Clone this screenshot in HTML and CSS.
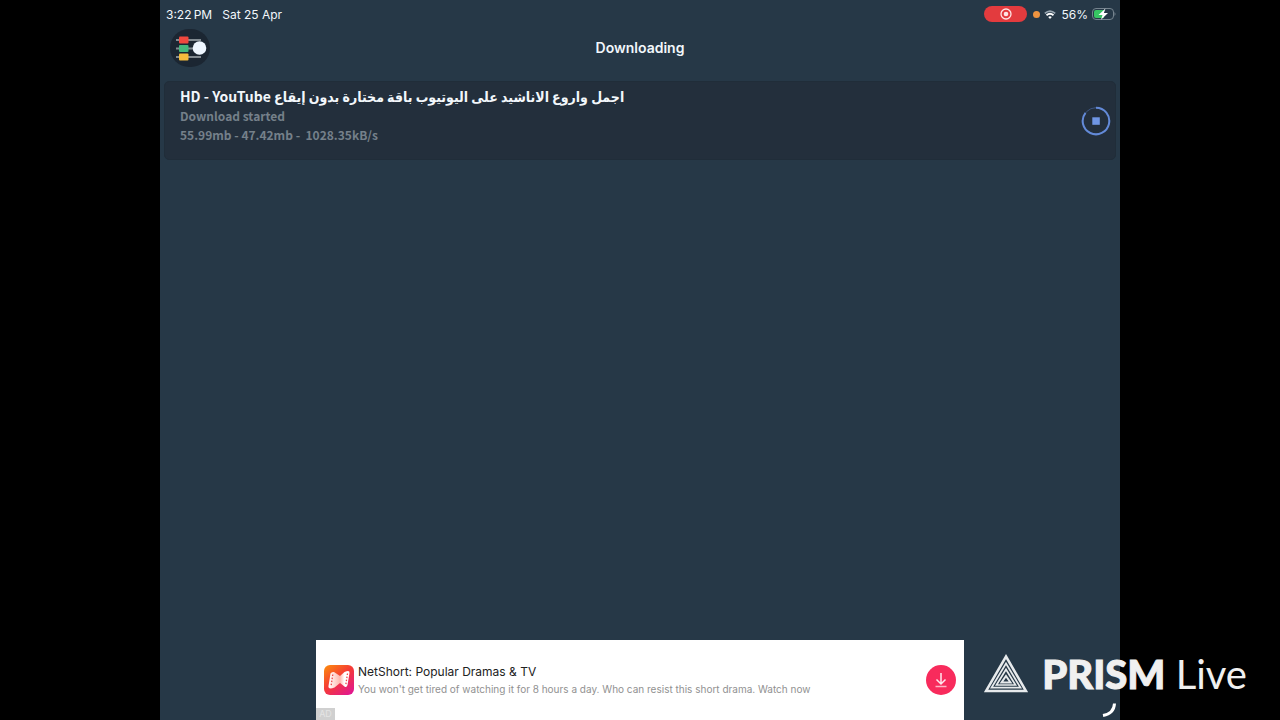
FILE: index.html
```html
<!DOCTYPE html>
<html lang="en">
<head>
	<title>Downloading</title>
	<meta charset="utf-8">
	<link rel="stylesheet" href="styles.css">
</head>
<body>
	<div class="screen">
		<div class="status">
			<span class="time">3:22&thinsp;PM</span>
			<span class="date">Sat 25 Apr</span>
			<div class="rec">
				<svg width="12" height="12" viewBox="0 0 12 12">
					<circle cx="6" cy="6" r="5" fill="none" stroke="#ffe3e3" stroke-width="1.3"/>
					<circle cx="6" cy="6" r="2.3" fill="#ffe3e3"/>
				</svg>
			</div>
			<i class="dot"></i>
			<svg class="wifi" width="12" height="9" viewBox="0 0 12 9">
				<path d="M0.8 3.4Q6 -1.2 11.2 3.4" fill="none" stroke="#98a6b1" stroke-width="1.7"/>
				<path d="M2.5 5.3Q6 2.4 9.500 5.3" fill="none" stroke="#fff" stroke-width="1.9"/>
				<path d="M4.2 7Q6 5.5 7.8 7L6 8.9z" fill="#fff"/>
			</svg>
			<span class="percent">56%</span>
			<svg width="24" height="12" viewBox="0 0 24 12">
				<rect x="0.5" y="0.5" width="21" height="11" rx="3.5" fill="none" stroke="#75838e"/>
				<path d="M4 2H12V10H4Q2 10 2 8V4Q2 2 4 2z" fill="#37c463"/>
				<path d="M22.500 4Q24.500 6 22.500 8z" fill="#75838e"/>
				<path d="M13.500 0.5L6.500 6.900H10.5L9 11.8L16 5.100H11.9z" fill="#fff"/>
			</svg>
		</div>
		<header class="nav">
			<button class="settings" aria-label="Settings">
				<svg width="40" height="38" viewBox="0 0 40 38">
					<path d="M6 11H31M6 19.500H31M6 28H31" stroke="#818a91" stroke-width="2"/>
					<rect x="9" y="7.500" width="9.500" height="7" rx="1" fill="#ef483e"/>
					<rect x="9" y="16" width="9.500" height="7" rx="1" fill="#43b77b"/>
					<rect x="9" y="24.500" width="9.500" height="7" rx="1" fill="#f5bc3c"/>
					<circle cx="29.500" cy="19" r="6.800" fill="#eef6ff"/>
				</svg>
			</button>
			<h1>Downloading</h1>
		</header>
		<main>
			<div class="item">
				<div class="info">
					<h2 dir="rtl">اجمل واروع الاناشيد على اليوتيوب باقة مختارة بدون إيقاع HD - YouTube</h2>
					<p>Download started</p>
					<p>55.99mb - 47.42mb -&nbsp; 1028.35kB/s</p>
				</div>
				<button class="stop" aria-label="Stop download">
					<svg width="30" height="30" viewBox="0 0 30 30">
						<circle cx="15" cy="15" r="13.300" fill="none" stroke="#3c5580" stroke-width="1"/>
						<path d="M15 1.700A13.300 13.300 0 1 1 4.500 6.800" fill="none" stroke="#638ad8" stroke-width="2"/>
						<rect x="11.300" y="11.300" width="7.500" height="7.500" fill="#6f96e4"/>
					</svg>
				</button>
			</div>
		</main>
		<div class="ad">
			<svg class="app" width="30" height="30" viewBox="0 0 30 30">
				<defs>
					<linearGradient id="bg" x1="0.100" y1="0" x2="0.900" y2="1">
						<stop offset="0" stop-color="#fb870f"/>
						<stop offset="0.450" stop-color="#f53b35"/>
						<stop offset="1" stop-color="#e01693"/>
					</linearGradient>
					<linearGradient id="film" x1="0" y1="0" x2="1" y2="0">
						<stop offset="0" stop-color="#fff"/>
						<stop offset="0.550" stop-color="#ffb9ad"/>
						<stop offset="0.750" stop-color="#fff"/>
					</linearGradient>
				</defs>
				<rect width="30" height="30" rx="6" fill="url(#bg)"/>
				<path d="M6.500 8.500Q7.500 6.500 10 7L16 11L20.500 7Q26 4.500 25.500 8L23.500 20Q22.500 23 20.500 21.500L16 18L10.500 22.500Q4 25 4.500 21z" fill="url(#film)"/>
				<path d="M8.800 9.500L7 21.500M23.500 8.500L21.700 20.500" stroke="#f04747" stroke-width="1.300" stroke-dasharray="1.500 1.600"/>
			</svg>
			<div class="adtext">
				<h3>NetShort: Popular Dramas &amp; TV</h3>
				<p>You won't get tired of watching it for 8 hours a day. Who can resist this short drama. Watch now</p>
			</div>
			<button class="get" aria-label="Download">
				<svg width="30" height="30" viewBox="0 0 30 30">
					<path d="M15 8V18.500M10.500 14.500L15 19L19.500 14.500" fill="none" stroke="#ffe8ee" stroke-width="1.500"/>
					<path d="M9.500 21.500H20.500" stroke="#ffb4c5" stroke-width="1.500"/>
				</svg>
			</button>
			<span class="tag">AD</span>
		</div>
	</div>
	<div class="brand">
		<svg width="44" height="41" viewBox="0 0 44 41">
			<path d="M22 2.500L42 37H2z" fill="none" stroke="#e7eaec" stroke-width="2.500"/>
			<path d="M22 9.500L36.500 33.700H7.500z" fill="none" stroke="#e7eaec" stroke-width="1.700"/>
			<path d="M22 15.500L31.500 31H12.500z" fill="none" stroke="#e7eaec" stroke-width="1.700"/>
			<path d="M22 22L26.500 28.500H17.500z" fill="none" stroke="#e7eaec" stroke-width="2"/>
		</svg>
		<span><b>PRISM</b> Live</span>
	</div>
	<svg class="spin" width="16" height="16" viewBox="0 0 16 16">
		<path d="M13.500 1.500Q13 11.500 2 13.500" fill="none" stroke="#fff" stroke-width="3"/>
	</svg>
</body>
</html>
```

FILE: styles.css
```css
*{
	margin:0;
	padding:0;
	box-sizing: border-box;
}
body{
	background: #000;
	font-family: Inter, "Liberation Sans", sans-serif;
	color: #f2f7fb;
	overflow: hidden;
}
button{
	border: 0;
	background: none;
	cursor: pointer;
}
svg{
	display: block;
}
.screen{
	width: 75%;
	min-height: 100vh;
	margin: 0 auto;
	background: #263847;
	display: flex;
	flex-direction: column;
}
.status{
	height: 28px;
	padding: 0 4px 0 6px;
	display: flex;
	align-items: center;
	font-size: 12px;
}
.date{
	margin-left: 10px;
}
.rec{
	width: 43px;
	height: 16px;
	margin-left: auto;
	border-radius: 8px;
	background: #e33b3e;
	display: flex;
	align-items: center;
	justify-content: center;
}
.dot{
	width: 7px;
	height: 7px;
	margin: 0 4px 0 6px;
	border-radius: 50%;
	background: #ee9440;
}
.percent{
	margin: 0 4px 0 5px;
}
.nav{
	height: 40px;
	padding: 0 10px;
	display: grid;
	grid-template-columns: 1fr auto 1fr;
	align-items: center;
}
.settings{
	width: 40px;
	height: 38px;
	border-radius: 20px;
	background: #1b2632;
}
.nav h1{
	font-size: 14px;
	line-height: 18px;
	font-weight: 600;
}
main{
	flex: 1;
	padding: 13px 4px;
}
.item{
	display: flex;
	align-items: center;
	min-height: 79px;
	padding: 0 4px 0 15px;
	border: 1px solid #202d39;
	border-radius: 5px;
	background: #232f3c;
}
.info{
	flex: 1;
	height: 69px;
	font-family: "Noto Sans CJK SC", "DejaVu Sans Condensed", sans-serif;
}
.info h2{
	font-size: 14px;
	line-height: 20px;
	font-weight: bold;
	text-align: left;
}
.info p{
	font-size: 12px;
	line-height: 19px;
	font-weight: bold;
	color: #75808a;
}
.ad{
	position: relative;
	width: 648px;
	max-width: 100%;
	height: 80px;
	margin: 0 auto;
	padding: 0 8px;
	background: #fff;
	display: flex;
	align-items: center;
}
.adtext{
	flex: 1;
	margin-left: 4px;
}
.adtext h3{
	font-size: 12px;
	line-height: 18px;
	font-weight: normal;
	color: #222;
}
.adtext p{
	font-size: 10px;
	line-height: 16px;
	color: #919191;
}
.get{
	width: 30px;
	height: 30px;
	border-radius: 50%;
	background: #f82b5c;
}
.tag{
	position: absolute;
	left: 0;
	bottom: 0;
	width: 19px;
	height: 12px;
	background: #d0d0d0;
	color: #e4e4e4;
	font-size: 9px;
	line-height: 12px;
	text-align: center;
}
.brand{
	position: absolute;
	right: 33px;
	bottom: 24px;
	display: flex;
	align-items: center;
	gap: 14px;
	font-family: Lato, sans-serif;
	font-size: 40px;
	line-height: 44px;
	color: #f0f0f0;
}
.brand b{
	font-weight: 900;
	-webkit-text-stroke: 1px #f0f0f0;
}
.spin{
	position: absolute;
	right: 163px;
	bottom: 2px;
}
```
